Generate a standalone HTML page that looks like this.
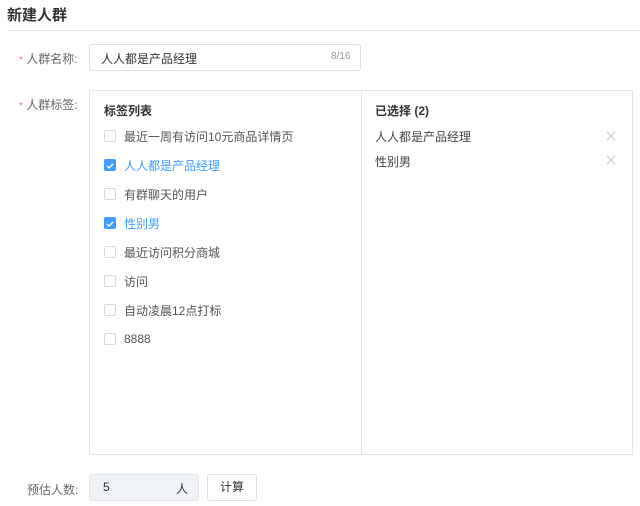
<!DOCTYPE html>
<html><head><meta charset="utf-8"><style>
*{margin:0;padding:0;box-sizing:border-box}
body{width:640px;height:506px;background:#fff;font-family:"Liberation Sans","Noto Sans CJK SC",sans-serif;font-size:12px;color:#333;position:relative;overflow:hidden}
.a{position:absolute;white-space:nowrap}
.title{left:7px;top:4px;font-size:15px;font-weight:600;color:#333}
.sep{left:7px;top:30px;width:633px;height:1px;background:#e6e6e6}
.lab{color:#666;font-size:12px}
.star{color:#f56c6c;font-size:10px}
.inp{left:89px;top:44px;width:272px;height:27px;border:1px solid #dcdfe6;border-radius:3px}
.box{left:89px;top:90px;width:544px;height:365px;border:1px solid #e2e4e8}
.div{left:361px;top:90px;width:1px;height:365px;background:#e2e4e8}
.cb{width:12px;height:12px;border:1px solid #d6d9de;border-radius:2px;background:#fff}
.cb.on{background:#409eff;border-color:#409eff}
.row{left:104px;height:16px;display:flex;align-items:center}
.row span{margin-left:8px;font-size:12px;color:#555}
.row.on span{color:#409eff}
</style></head><body>
<div class="a title">新建人群</div>
<div class="a sep"></div>
<div class="a lab" style="left:19px;top:50px"><span class="star">*</span> 人群名称:</div>
<div class="a inp"></div>
<div class="a" style="left:101px;top:50px;font-size:12px;color:#333">人人都是产品经理</div>
<div class="a" style="left:331px;top:51px;font-size:10px;color:#999">8/16</div>
<div class="a lab" style="left:19px;top:96px"><span class="star">*</span> 人群标签:</div>
<div class="a box"></div>
<div class="a div"></div>
<div class="a" style="left:104px;top:102px;font-weight:bold;color:#333">标签列表</div>
<div class="a row" style="top:128px"><div class="cb"></div><span>最近一周有访问10元商品详情页</span></div>
<div class="a row on" style="top:157px"><div class="cb on"><svg width="10" height="10" viewBox="0 0 10 10"><path d="M2 5l2 2 4-4" stroke="#fff" stroke-width="1.4" fill="none"/></svg></div><span>人人都是产品经理</span></div>
<div class="a row" style="top:186px"><div class="cb"></div><span>有群聊天的用户</span></div>
<div class="a row on" style="top:215px"><div class="cb on"><svg width="10" height="10" viewBox="0 0 10 10"><path d="M2 5l2 2 4-4" stroke="#fff" stroke-width="1.4" fill="none"/></svg></div><span>性别男</span></div>
<div class="a row" style="top:244px"><div class="cb"></div><span>最近访问积分商城</span></div>
<div class="a row" style="top:273px"><div class="cb"></div><span>访问</span></div>
<div class="a row" style="top:302px"><div class="cb"></div><span>自动凌晨12点打标</span></div>
<div class="a row" style="top:331px"><div class="cb"></div><span>8888</span></div>
<div class="a" style="left:375px;top:102px;font-weight:bold;color:#333">已选择 (2)</div>
<div class="a" style="left:375px;top:128px;color:#444">人人都是产品经理</div>
<svg class="a" style="left:606px;top:131px" width="10" height="10" viewBox="0 0 10 10"><path d="M1 1L9 9M9 1L1 9" stroke="#c0c4cc" stroke-width="1"/></svg>
<div class="a" style="left:375px;top:153px;color:#444">性别男</div>
<svg class="a" style="left:606px;top:155px" width="10" height="10" viewBox="0 0 10 10"><path d="M1 1L9 9M9 1L1 9" stroke="#c0c4cc" stroke-width="1"/></svg>
<div class="a lab" style="left:27px;top:481px">预估人数:</div>
<div class="a" style="left:89px;top:474px;width:110px;height:27px;background:#eff2f6;border:1px solid #e2e6ec;border-radius:3px"></div>
<div class="a" style="left:103px;top:480px;color:#333">5</div>
<div class="a" style="left:176px;top:480px;color:#333">人</div>
<div class="a" style="left:207px;top:474px;width:50px;height:27px;border:1px solid #dcdfe6;border-radius:3px;text-align:center;line-height:25px;color:#333">计算</div>
</body></html>
